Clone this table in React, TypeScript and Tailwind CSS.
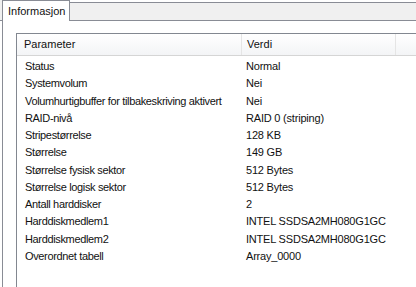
import React from "react";

const rows: [string, string][] = [
  ["Status", "Normal"],
  ["Systemvolum", "Nei"],
  ["Volumhurtigbuffer for tilbakeskriving aktivert", "Nei"],
  ["RAID-nivå", "RAID 0 (striping)"],
  ["Stripestørrelse", "128 KB"],
  ["Størrelse", "149 GB"],
  ["Størrelse fysisk sektor", "512 Bytes"],
  ["Størrelse logisk sektor", "512 Bytes"],
  ["Antall harddisker", "2"],
  ["Harddiskmedlem1", "INTEL SSDSA2MH080G1GC"],
  ["Harddiskmedlem2", "INTEL SSDSA2MH080G1GC"],
  ["Overordnet tabell", "Array_0000"],
];

export default function App() {
  return (
    <div
      className="w-[416px] h-[287px] overflow-hidden bg-white text-[#111] text-[11px] leading-none"
      style={{ fontFamily: '"Liberation Sans", Arial, sans-serif' }}
    >
      {/* tab strip */}
      <div className="flex h-[21px]">
        <div className="w-[2px] bg-[#f0f0f0] border-b border-[#898c95]" />
        <div className="w-[68px] border-l border-r border-t border-[#898c95] bg-white flex items-center pl-[5px] pt-[1px] text-[11px]">
          Informasjon
        </div>
        <div className="flex-1 flex flex-col">
          <div className="h-[2px] bg-white" />
          <div className="flex-1 bg-[#f0f0f0] border-t border-[#898c95] border-b border-[#898c95]" />
        </div>
      </div>
      {/* tab page */}
      <div className="ml-[2px] border-l border-[#898c95] h-[266px] pl-[13px] pt-[12px]">
        <div className="border-t border-l border-[#828790] h-full">
          {/* header */}
          <div className="flex h-[22px] bg-gradient-to-b from-white to-[#f3f4f6] border-b border-[#d5d5d5]">
            <div className="w-[225px] flex items-center pl-[7px] border-r border-[#e5e5e5]">Parameter</div>
            <div className="w-[154px] flex items-center pl-[5px] border-r border-[#e5e5e5]">Verdi</div>
            <div className="flex-1" />
          </div>
          <div className="pt-[2px]">
            {rows.map(([k, v]) => (
              <div key={k} className="flex h-[17.25px] items-center">
                <div className="w-[225px] pl-[8px] whitespace-nowrap tracking-[-0.35px]">{k}</div>
                <div className="pl-[4px] whitespace-nowrap tracking-[-0.2px]">{v}</div>
              </div>
            ))}
          </div>
        </div>
      </div>
    </div>
  );
}
